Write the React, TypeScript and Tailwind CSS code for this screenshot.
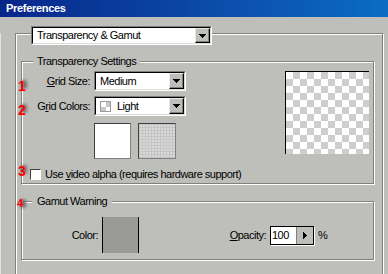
import React from 'react'

function DownArrow() {
  return (
    <svg width="7" height="4" viewBox="0 0 7 4" shapeRendering="crispEdges">
      <path d="M0 0h7L3.5 4z" fill="#000" />
    </svg>
  )
}

function ArrowButton({ className = '' }: { className?: string }) {
  return (
    <div
      className={`flex items-center justify-center bg-[#bebfbb] border border-t-[#e8e8e8] border-l-[#e8e8e8] border-r-black border-b-black shadow-[inset_-1px_-1px_0_#808080] ${className}`}
    >
      <DownArrow />
    </div>
  )
}

function Combo({ className, children }: { className: string; children: React.ReactNode }) {
  return (
    <div className={`flex border border-t-[#808080] border-l-[#808080] border-r-white border-b-white ${className}`}>
      <div className="flex flex-1 bg-white border border-t-black border-l-black border-r-[#dcdcdc] border-b-[#dcdcdc]">
        <div className="flex flex-1 items-center pl-[4px] leading-none whitespace-nowrap">{children}</div>
        <ArrowButton className="w-[15px]" />
      </div>
    </div>
  )
}

function Note({ n, className }: { n: string; className: string }) {
  return (
    <div className={`absolute tracking-normal ${className}`}>
      <span className="absolute left-[3px] top-[4px] w-[6px] h-[9px] rounded-full bg-[#6e6e6e] blur-[1.5px]" />
      <span className="relative text-[#ff0000] font-bold leading-[14px]">{n}</span>
    </div>
  )
}

export default function App() {
  const etched = 'border border-[#808080] shadow-[inset_1px_1px_0_#fff,1px_1px_0_#fff]'

  return (
    <div className="relative w-[388px] h-[274px] overflow-hidden bg-[#bebfbb] text-black text-[11px] tracking-[-0.5px] font-['Liberation_Sans',Arial,sans-serif]">
      {/* Title bar */}
      <div className="h-[17px] pl-[6px] bg-linear-to-r from-[#08268a] via-[#0c48a6] to-[#0b6cc4] text-white font-bold text-[11px] leading-[17px] tracking-[-0.3px]">
        Preferences
      </div>

      <div className="h-[257px] border-l border-[#e2e2e2]">
        {/* Outer panel */}
        <div className={`relative ml-[14px] mt-[16px] w-[368px] h-[260px] pl-[5px] pt-[27px] ${etched}`}>
          <div className="absolute left-[15px] top-[-8px] bg-[#bebfbb]">
            <Combo className="w-[181px] h-[19px]">Transparency &amp; Gamut</Combo>
          </div>

          {/* Transparency Settings */}
          <div className={`relative w-[353px] h-[123px] pt-[9px] ${etched}`}>
            <div className="absolute left-[11px] top-[-8px] px-[4px] leading-[14px] bg-[#bebfbb]">
              Transparency Settings
            </div>

            <div className="flex justify-between pr-[4px]">
              <div className="flex flex-col">
                <div className="flex items-center">
                  <span className="w-[68px] text-right">
                    <u>G</u>rid Size:
                  </span>
                  <Combo className="ml-[4px] w-[92px] h-[20px]">Medium</Combo>
                </div>
                <div className="flex items-center mt-[5px]">
                  <span className="w-[68px] text-right">
                    G<u>r</u>id Colors:
                  </span>
                  <Combo className="ml-[4px] w-[92px] h-[20px]">
                    <span className="mr-[6px] w-[11px] h-[11px] border border-[#9a9a9a] bg-[conic-gradient(#c8c8c8_25%,#fff_0_50%,#c8c8c8_0_75%,#fff_0)] [background-size:10px_10px]" />
                    Light
                  </Combo>
                </div>
                <div className="flex ml-[72px] mt-[7px] gap-[7px]">
                  <div className="w-[37px] h-[36px] bg-white border border-t-[#404040] border-l-[#404040] border-r-[#808080] border-b-[#808080]" />
                  <div className="w-[38px] h-[36px] border border-t-[#404040] border-l-[#404040] border-r-[#808080] border-b-[#808080] bg-[#d9d9d9] bg-[linear-gradient(90deg,#c4c4c4_1px,transparent_1px),linear-gradient(#c4c4c4_1px,transparent_1px)] [background-size:3px_3px]" />
                </div>
              </div>

              <div className="w-[84px] h-[83px] border-t border-l border-black bg-[conic-gradient(#cecece_25%,#fff_0_50%,#cecece_0_75%,#fff_0)] [background-size:14px_14px]" />
            </div>

            <div className="flex items-center mt-[7px] pl-[8px] gap-[4px]">
              <span className="w-[11px] h-[11px] bg-white border border-t-[#404040] border-l-[#404040] border-r-white border-b-white" />
              <span>
                Use <u>v</u>ideo alpha (requires hardware support)
              </span>
            </div>
          </div>

          {/* Gamut Warning */}
          <div className={`relative mt-[17px] w-[353px] h-[59px] pt-[15px] ${etched}`}>
            <div className="absolute left-[10px] top-[-8px] px-[5px] leading-[14px] bg-[#bebfbb]">
              Gamut Warning
            </div>
            <div className="flex items-center">
              <span className="w-[76px] text-right">Color:</span>
              <div className="ml-[4px] w-[37px] h-[36px] bg-[#9a9b98] border-l border-r border-black" />
              <span className="w-[127px] text-right">
                <u>O</u>pacity:
              </span>
              <div className="ml-[4px] flex w-[44px] h-[19px] border border-black shadow-[1px_1px_0_#fff]">
                <span className="flex-1 bg-white pl-[1px] leading-[17px]">100</span>
                <span className="flex w-[17px] items-center justify-center bg-[#bebfbb] border-l border-[#808080]">
                  <svg width="4" height="7" viewBox="0 0 4 7" shapeRendering="crispEdges">
                    <path d="M0 0l4 3.5L0 7z" fill="#000" />
                  </svg>
                </span>
              </div>
              <span className="ml-[4px]">%</span>
            </div>
          </div>
        </div>
      </div>

      {/* Annotation numbers */}
      <Note n="1" className="left-[18px] top-[76px] text-[14px]" />
      <Note n="2" className="left-[18px] top-[100px] text-[14px]" />
      <Note n="3" className="left-[18px] top-[161px] text-[14px]" />
      <Note n="4" className="left-[17px] top-[195px] text-[11px]" />
    </div>
  )
}
